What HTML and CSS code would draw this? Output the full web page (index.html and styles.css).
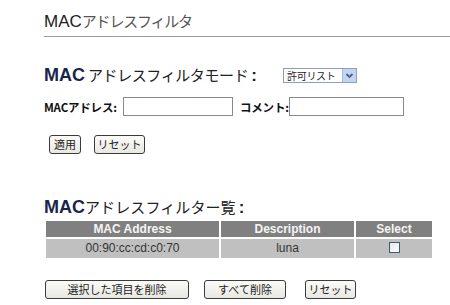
FILE: index.html
```html
<!DOCTYPE html>
<html lang="ja">
<head>
<meta charset="utf-8">
<link rel="stylesheet" href="styles.css">
</head>
<body>
<h1 class="title"><span class="mac">MAC</span>アドレスフィルタ</h1>

<div class="mode-row">
  <h2 class="mode-label"><b class="navy">MAC</b> アドレスフィルタモード<b class="colon">:</b></h2>
  <div class="select">
    <span class="select-text">許可リスト</span>
    <span class="select-arrow"><svg width="11" height="11" viewBox="0 0 11 11"><path d="M2.5 4 L5.5 7 L8.5 4" fill="none" stroke="#4d6185" stroke-width="1.8"/></svg></span>
  </div>
</div>

<div class="form-row">
  <label class="field-label">MACアドレス:</label>
  <span class="input wide"></span>
  <label class="field-label comment">コメント:</label>
  <span class="input wide2"></span>
</div>

<div class="btn-row top-btns">
  <button class="btn">適用</button>
  <button class="btn">リセット</button>
</div>

<h2 class="list-title"><b class="navy">MAC</b>アドレスフィルター覧<b class="colon">:</b></h2>

<table class="list">
  <thead>
    <tr><th class="c1">MAC Address</th><th class="c2">Description</th><th class="c3">Select</th></tr>
  </thead>
  <tbody>
    <tr><td>00:90:cc:cd:c0:70</td><td>luna</td><td><span class="check"></span></td></tr>
  </tbody>
</table>

<div class="btn-row bottom-btns">
  <button class="btn b1">選択した項目を削除</button>
  <button class="btn b2">すべて削除</button>
  <button class="btn b3">リセット</button>
</div>
</body>
</html>
```

FILE: styles.css
```css
html, body {
  margin: 0;
  padding: 0;
  background: #ffffff;
}
body {
  font-family: "Noto Sans CJK JP", "Liberation Sans", sans-serif;
  color: #222;
  width: 450px;
  height: 305px;
  overflow: hidden;
}
.title {
  margin: 0 0 0 44px;
  height: 37px;
  box-sizing: border-box;
  padding-top: 12px;
  font-size: 15px;
  line-height: 18px;
  font-weight: 400;
  color: #555;
  letter-spacing: -1.2px;
  white-space: nowrap;
  border-bottom: 1px solid #9c9c96;
}
.title .mac {
  font-family: "Liberation Sans", sans-serif;
  color: #222;
  font-size: 17px;
  letter-spacing: 0;
}
.navy {
  font-family: "Liberation Sans", sans-serif;
  font-weight: 700;
  color: #17264c;
  letter-spacing: 0;
}
.colon {
  font-family: "Liberation Sans", sans-serif;
  font-weight: 700;
  font-size: 17px;
  margin-left: 3px;
}
.mode-row {
  margin: 30px 0 0 44px;
  height: 16px;
  display: flex;
  align-items: center;
}
.mode-label {
  margin: 0;
  font-size: 15px;
  line-height: 16px;
  font-weight: 400;
  color: #222;
  width: 239px;
  flex: none;
  white-space: nowrap;
  letter-spacing: -0.4px;
}
.mode-label .navy {
  font-size: 18px;
}
.select {
  display: flex;
  align-items: center;
  height: 15px;
  width: 74px;
  box-sizing: border-box;
  border: 1px solid #8aa0bf;
  background: #fff;
}
.select-text {
  flex: 1;
  font-size: 10px;
  line-height: 13px;
  padding-left: 3px;
  letter-spacing: -0.3px;
  white-space: nowrap;
  color: #222;
}
.select-arrow {
  width: 13px;
  height: 13px;
  background: #c3d3f3;
  border-left: 1px solid #a7bbe0;
  display: flex;
  align-items: center;
  justify-content: center;
}
.form-row {
  margin: 14px 0 0 44px;
  height: 19px;
  display: flex;
  align-items: center;
}
.field-label {
  font-size: 11.5px;
  font-weight: 700;
  color: #111;
  letter-spacing: -0.2px;
  width: 79px;
  white-space: nowrap;
}
.field-label.comment {
  width: 49px;
  margin-left: 7px;
}
.input {
  display: block;
  height: 19px;
  box-sizing: border-box;
  border: 1px solid #8a8a8a;
  background: #fff;
}
.input.wide { width: 110px; }
.input.wide2 { width: 115px; }
.btn-row {
  display: flex;
  align-items: center;
}
.top-btns {
  margin: 19px 0 0 49px;
  gap: 13px;
}
.btn {
  height: 19px;
  box-sizing: border-box;
  border: 1px solid #3b3b3b;
  border-radius: 3px;
  background: linear-gradient(#fbfbf8, #e8e8e2);
  font-family: "Noto Sans CJK JP", sans-serif;
  font-size: 11px;
  line-height: 15px;
  padding: 0 5px;
  color: #222;
  white-space: nowrap;
}
.top-btns .btn:first-child { width: 32px; padding: 0; }
.top-btns .btn:last-child { width: 51px; padding: 0; }
.list-title {
  margin: 42px 0 0 44px;
  font-size: 15px;
  line-height: 22px;
  font-weight: 400;
  color: #222;
  white-space: nowrap;
  letter-spacing: 0.1px;
}
.list-title .navy {
  font-size: 18px;
}
.list {
  margin: 0 0 0 44px;
  border-collapse: separate;
  border-spacing: 2px;
  width: 390px;
  table-layout: fixed;
  font-family: "Liberation Sans", sans-serif;
  font-size: 12px;
}
.list th {
  background: #808080;
  color: #f4f4f4;
  font-weight: 700;
  height: 16px;
  padding: 0;
  line-height: 16px;
}
.list td {
  background: #c0c0c0;
  color: #333;
  height: 19px;
  padding: 0;
  text-align: center;
  line-height: 19px;
}
.c1 { width: 173px; }
.c2 { width: 133px; }
.c3 { width: 76px; }
.check {
  display: inline-block;
  width: 11px;
  height: 11px;
  box-sizing: border-box;
  border: 1px solid #3a5a80;
  background: linear-gradient(135deg, #e8e8e4, #fdfdfd);
  vertical-align: middle;
  margin-top: -2px;
}
.bottom-btns {
  margin: 20px 0 0 45px;
}
.b1 { width: 144px; }
.b2 { width: 82px; margin-left: 15px; }
.b3 { width: 51px; margin-left: 19px; padding: 0; }
```
